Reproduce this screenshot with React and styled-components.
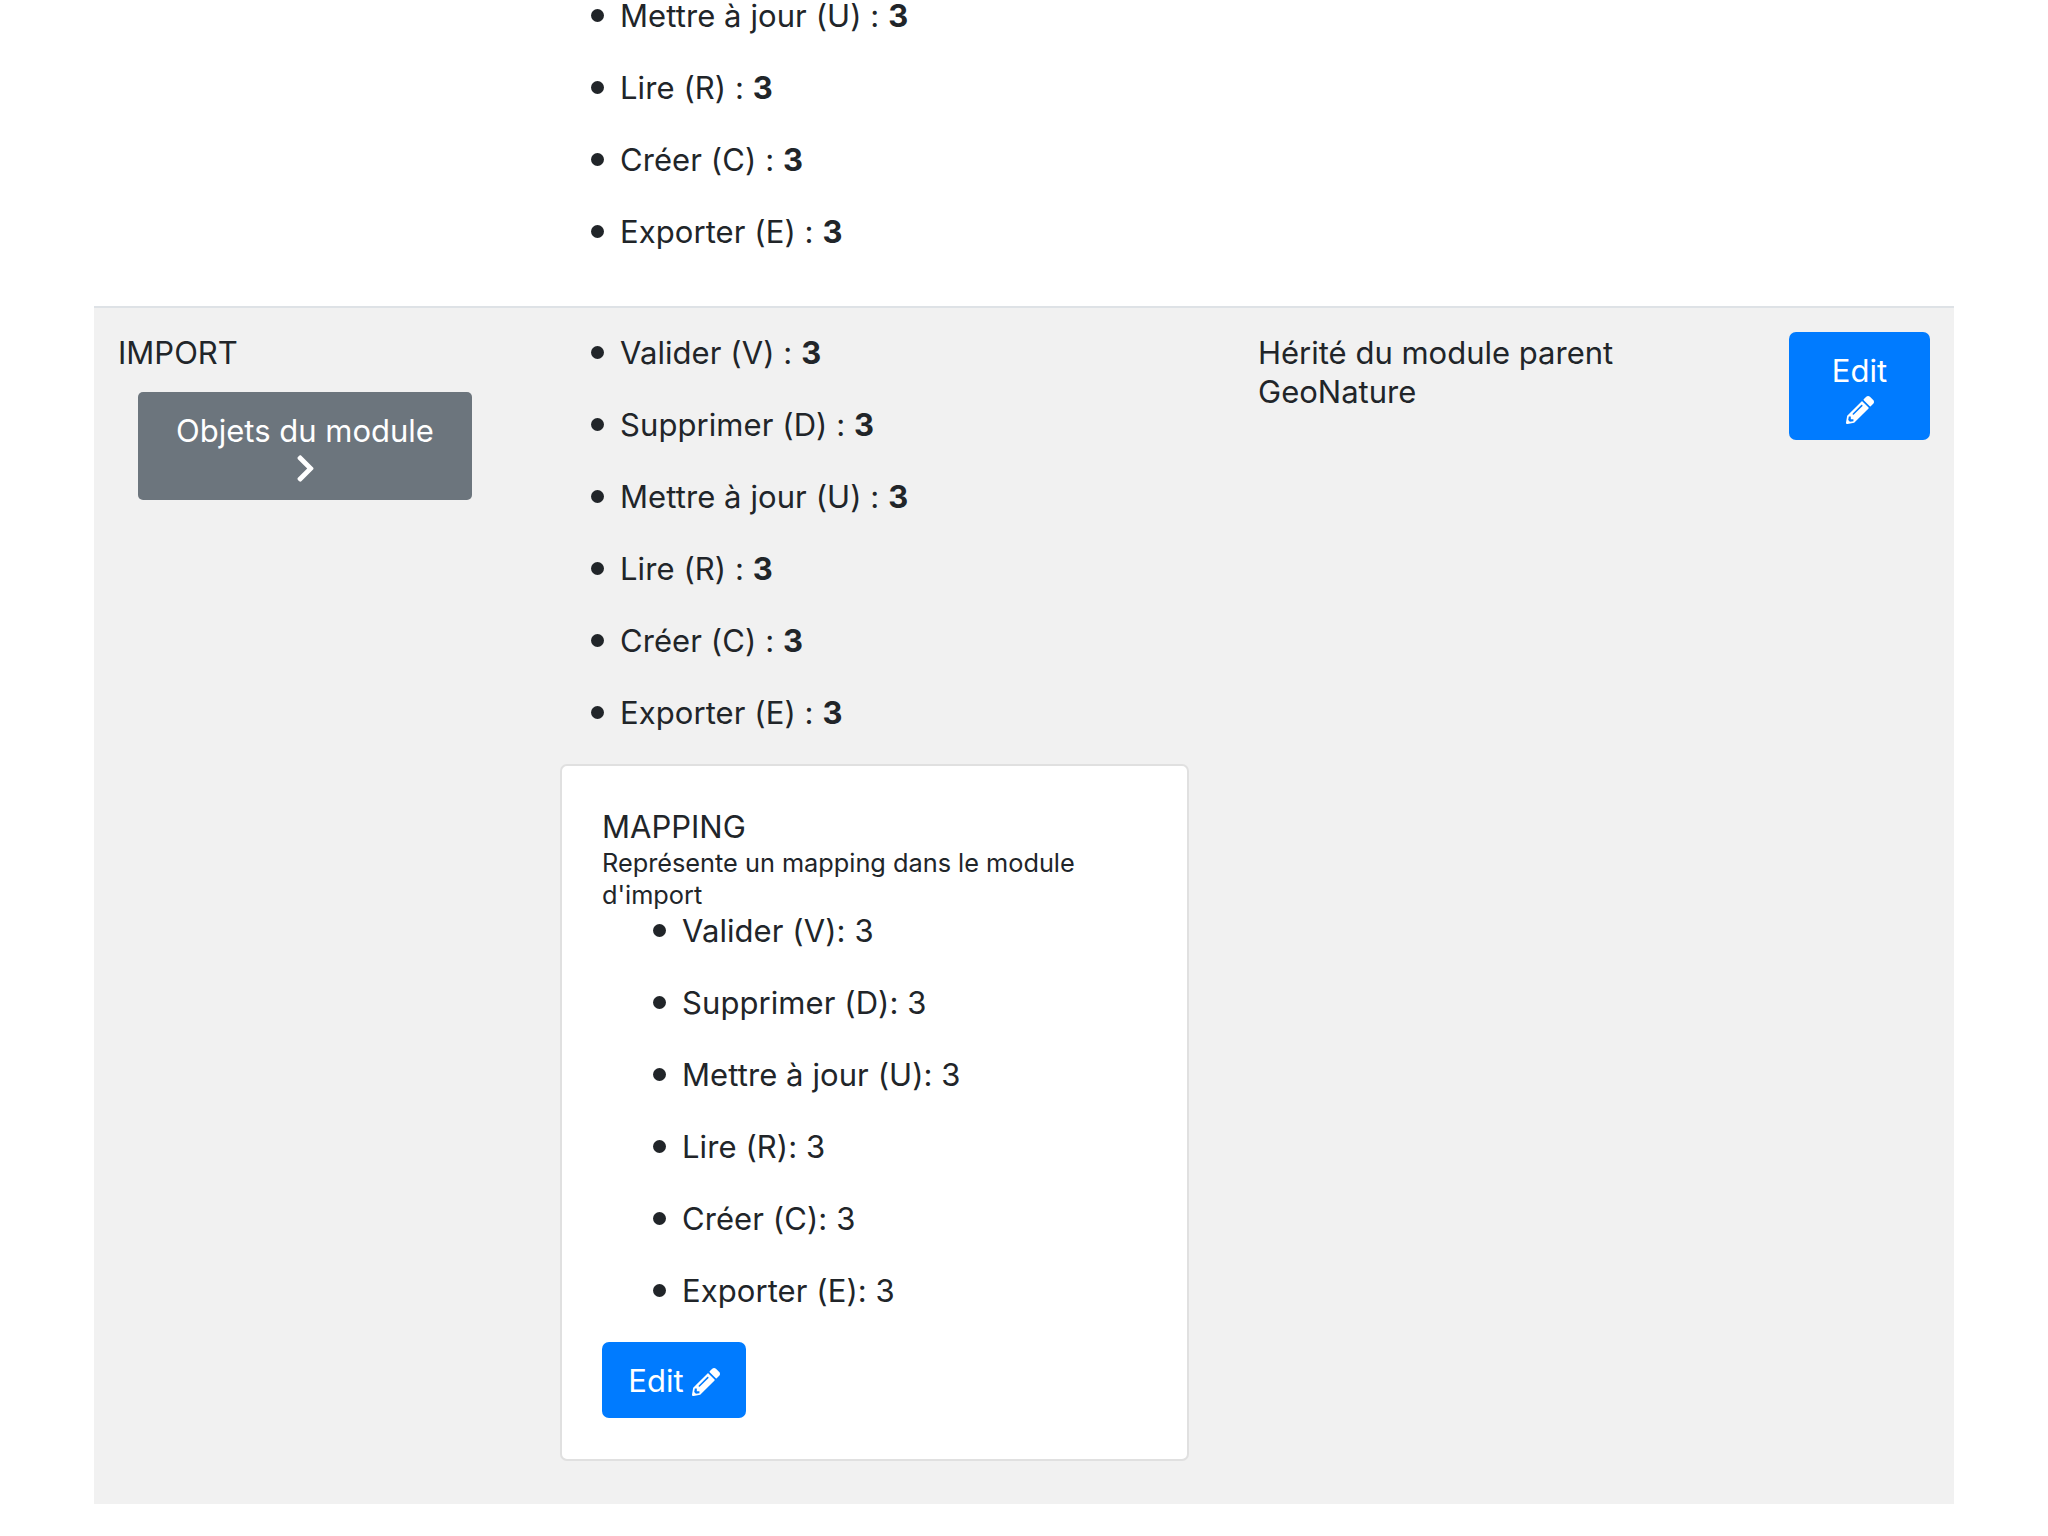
import React from "react";
import styled, { createGlobalStyle } from "styled-components";
import { FaPencilAlt, FaChevronRight } from "react-icons/fa";

const Global = createGlobalStyle`
  html, body { margin: 0; padding: 0; background: #fff; height: 1536px; overflow: hidden; }
  body { font-family: Inter, "Liberation Sans", sans-serif; font-size: 31px; line-height: 39px; color: #212529; }
`;

const Table = styled.div`
  margin: 0 94px;
  width: 1860px;
`;

const Row = styled.div`
  display: grid;
  grid-template-columns: 443px 697px 531px 189px;
  padding: 25px 0 43px;
  background: ${(p) => (p.$shaded ? "#f1f1f1" : "#fff")};
  border-top: ${(p) => (p.$shaded ? "2px solid #dee2e6" : "none")};
`;

const TopRow = styled(Row)`
  margin-top: -29px;
  padding-bottom: 22px;
`;

const Cell = styled.div`
  padding: 0 24px;
  min-width: 0;
`;

const PermList = styled.ul`
  list-style: none;
  margin: 0;
  padding: 0 0 0 ${(p) => p.$indent}px;
`;

const PermItem = styled.li`
  position: relative;
  margin-bottom: 33px;
  letter-spacing: 0.08px;
  &::before {
    content: "";
    position: absolute;
    left: -29px;
    top: 13px;
    width: 13px;
    height: 13px;
    border-radius: 50%;
    background: #212529;
  }
`;

const CardItem = styled(PermItem)`
  &:last-child { margin-bottom: 32px; }
`;

const ObjectsButton = styled.button`
  display: block;
  width: 334px;
  height: 108px;
  margin: 20px 0 0 20px;
  padding: 19px 0 11px;
  border: 0;
  border-radius: 5px;
  background: #6c757d;
  color: #fff;
  font: inherit;
  text-align: center;
  svg { display: block; margin: 3px auto 5px; width: 31px; height: 31px; }
`;

const EditButton = styled.button`
  display: block;
  border: 0;
  border-radius: 7px;
  background: #007bff;
  color: #fff;
  font: inherit;
  text-align: center;
  svg { width: 28px; height: 28px; }
`;

const StackedEdit = styled(EditButton)`
  width: 141px;
  height: 108px;
  margin-top: -1px;
  padding: 19px 0 11px;
  svg { display: block; margin: 6px auto 5px; }
`;

const InlineEdit = styled(EditButton)`
  width: 144px;
  height: 76px;
  padding: 0;
  svg { vertical-align: -4px; margin-left: 8px; }
`;

const Card = styled.section`
  width: 629px;
  margin: -1px 0 0 -1px;
  box-sizing: border-box;
  background: #fff;
  border: 2px solid #e0e0e0;
  border-radius: 7px;
  padding: 41px 40px 41px;
`;

const CardTitle = styled.div``;

const CardText = styled.div`
  font-size: 25.3px;
  line-height: 31.5px;
  margin-top: 1px;
  margin-bottom: 1px;
`;

const Bold = styled.b`
  font-weight: 700;
`;

const perms = [
  ["Valider", "V"],
  ["Supprimer", "D"],
  ["Mettre à jour", "U"],
  ["Lire", "R"],
  ["Créer", "C"],
  ["Exporter", "E"],
];

const Perms = ({ items }) => (
  <PermList $indent={59}>
    {items.map(([n, c]) => (
      <PermItem key={c}>
        {n} ({c}) : <Bold>3</Bold>
      </PermItem>
    ))}
  </PermList>
);

export default function App() {
  return (
    <>
      <Global />
      <Table>
        <TopRow>
          <Cell />
          <Cell>
            <Perms items={perms.slice(2)} />
          </Cell>
          <Cell />
          <Cell />
        </TopRow>
        <Row $shaded>
          <Cell>
            IMPORT
            <ObjectsButton>
              Objets du module
              <FaChevronRight />
            </ObjectsButton>
          </Cell>
          <Cell>
            <Perms items={perms} />
            <Card>
              <CardTitle>MAPPING</CardTitle>
              <CardText>Représente un mapping dans le module d'import</CardText>
              <PermList $indent={80}>
                {perms.map(([n, c]) => (
                  <CardItem key={c}>
                    {n} ({c}): 3
                  </CardItem>
                ))}
              </PermList>
              <InlineEdit>
                Edit
                <FaPencilAlt />
              </InlineEdit>
            </Card>
          </Cell>
          <Cell>Hérité du module parent GeoNature</Cell>
          <Cell>
            <StackedEdit>
              Edit
              <FaPencilAlt />
            </StackedEdit>
          </Cell>
        </Row>
      </Table>
    </>
  );
}
